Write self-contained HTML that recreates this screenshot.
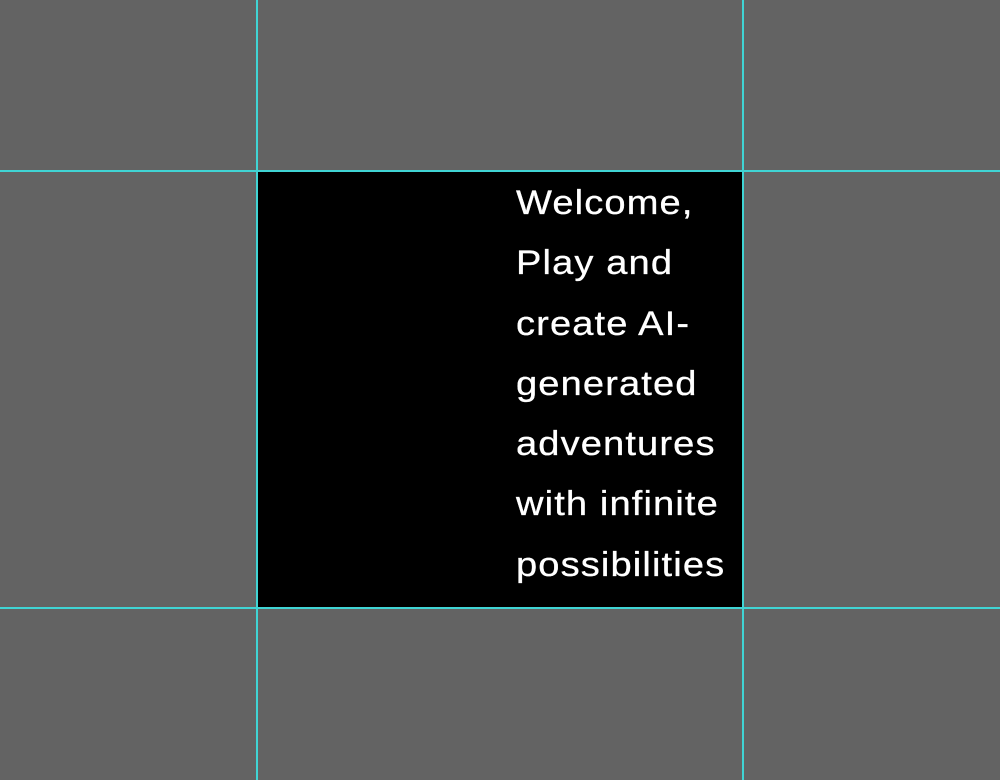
<!DOCTYPE html>
<html><head><style>
html,body{margin:0;padding:0;}
body{width:1000px;height:780px;background:#636363;position:relative;overflow:hidden;font-family:"Liberation Sans",sans-serif;}
.v{position:absolute;top:0;width:2px;height:780px;background:#40d4d4;}
.h{position:absolute;left:0;height:2px;width:1000px;background:#40d4d4;}
.box{position:absolute;left:258px;top:172px;width:484px;height:435px;background:#000;}
.t{position:absolute;left:516px;top:173px;color:#fff;font-size:34px;line-height:60.3px;letter-spacing:1px;white-space:nowrap;transform:scaleX(1.12);transform-origin:0 0;-webkit-text-stroke:0.3px #fff;}
</style></head><body>
<div class="box"></div>
<div class="v" style="left:256px"></div>
<div class="v" style="left:742px"></div>
<div class="h" style="top:170px"></div>
<div class="h" style="top:607px"></div>
<div class="t"><div>Welcome,</div><div>Play and</div><div>create AI-</div><div>generated</div><div>adventures</div><div>with infinite</div><div>possibilities</div></div>
</body></html>
